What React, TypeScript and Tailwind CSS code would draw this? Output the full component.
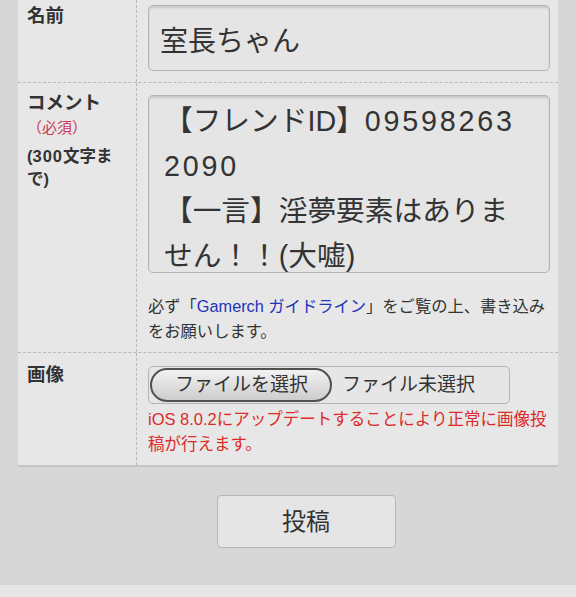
import React from "react";

const font = { fontFamily: '"Liberation Sans", "Noto Sans CJK JP", sans-serif' };

export default function App() {
  return (
    <div
      className="w-[576px] h-[597px] bg-[#d7d7d7] flex flex-col text-[#333]"
      style={font}
    >
      <div className="mx-[18px] bg-[#e7e7e7] border-b-2 border-[#c6c6c6]">
        {/* Row 1 */}
        <div className="grid grid-cols-[118px_1fr]">
          <div className="pl-[9px] pt-[4px] text-[18.5px] leading-[24px] font-bold">名前</div>
          <div className="border-l border-dashed border-[#b9b9b9] pl-[11px] pr-[8px] pt-[5px] pb-[11px]">
            <div className="h-[66px] rounded-[5px] border border-[#b4b4b4] bg-[#e5e5e5] shadow-[inset_0_2px_2px_rgba(0,0,0,0.12)] pl-[11px] pt-[16px] text-[28px] leading-[40px]">
              室長ちゃん
            </div>
          </div>
        </div>
        {/* Row 2 */}
        <div className="grid grid-cols-[118px_1fr] border-t border-dashed border-[#b9b9b9]">
          <div className="pl-[9px] pt-[8px]">
            <div className="text-[18.5px] leading-[24px] font-bold">コメント</div>
            <div className="text-[15px] leading-[26px] text-[#cc3a5a]">（必須）</div>
            <div className="mt-[4px] text-[16.5px] leading-[23px] font-bold">
              (<span className="tracking-[1px]">300</span>文字ま
              <br />
              で)
            </div>
          </div>
          <div className="border-l border-dashed border-[#b9b9b9] pl-[11px] pr-[8px] pt-[12px] pb-[8px]">
            <div className="h-[178px] overflow-hidden rounded-[5px] border border-[#b4b4b4] bg-[#e5e5e5] shadow-[inset_0_2px_2px_rgba(0,0,0,0.12)] pl-[15px] pt-[3px] text-[28.7px] leading-[45px]">
              <div>
                【フレンドID】<span className="tracking-[2.8px]">09598263</span>
              </div>
              <div className="tracking-[2.8px]">2090</div>
              <div>【一言】淫夢要素はありま</div>
              <div>せん！！(大嘘)</div>
            </div>
            <div className="mt-[21px] text-[16.3px] leading-[25px] text-[#333]">
              必ず「<span className="text-[#2233bb]">Gamerch ガイドライン</span>」をご覧の上、書き込み
              <br />
              をお願いします。
            </div>
          </div>
        </div>
        {/* Row 3 */}
        <div className="grid grid-cols-[118px_1fr] border-t border-dashed border-[#b9b9b9]">
          <div className="pl-[9px] pt-[10px] text-[18.5px] leading-[24px] font-bold">画像</div>
          <div className="border-l border-dashed border-[#b9b9b9] pl-[11px] pr-[8px] pt-[13px] pb-[8px]">
            <div className="w-[362px] h-[38px] rounded-[5px] border border-[#b4b4b4] bg-[#e6e6e6] flex items-center pl-[1px]">
              <div className="h-[34px] w-[182px] rounded-[17px] border-2 border-[#505050] bg-gradient-to-b from-[#f2f2f2] to-[#cdcdcd] flex items-center pl-[23px] text-[19px] leading-[24px]">
                ファイルを選択
              </div>
              <div className="ml-[10px] text-[19px] leading-[24px]">ファイル未選択</div>
            </div>
            <div className="mt-[3px] text-[16.5px] leading-[25px] text-[#dd2a2a]">
              iOS 8.0.2にアップデートすることにより正常に画像投
              <br />
              稿が行えます。
            </div>
          </div>
        </div>
      </div>
      <div className="flex justify-center pt-[28px] pl-[36px]">
        <div className="w-[179px] h-[53px] rounded-[4px] border border-[#b7b7b7] bg-[#e5e5e5] flex items-center justify-center text-[24px] text-[#333]">
          投稿
        </div>
      </div>
      <div className="flex-1" />
      <div className="h-[12px] bg-[#e6e6e6]" />
    </div>
  );
}
